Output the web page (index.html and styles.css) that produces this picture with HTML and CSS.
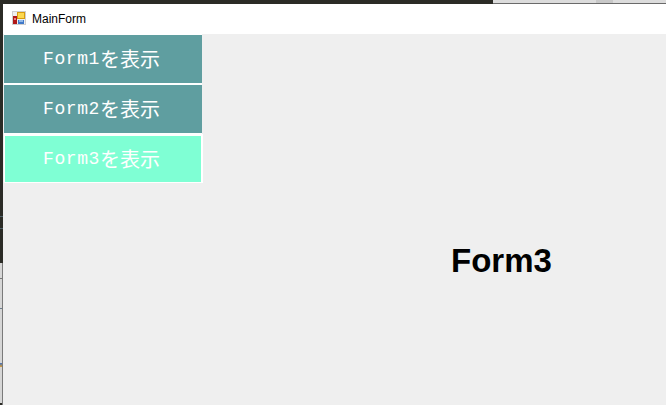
FILE: index.html
```html
<!DOCTYPE html>
<html lang="ja">
<head>
<meta charset="utf-8">
<title>MainForm</title>
<link rel="stylesheet" href="styles.css">
</head>
<body>
<div class="topstrip">
  <div class="top-dark"></div>
  <div class="top-light"><div class="top-a"></div><div class="top-b"></div><div class="top-c"></div></div>
</div>
<div class="desk">
  <div class="leftstrip">
    <div class="left-dark"></div>
    <div class="left-light"></div>
  </div>
  <div class="window">
    <div class="titlebar">
      <svg class="appicon" width="14" height="14" viewBox="0 0 14 14">
        <rect x="0" y="0" width="14" height="14" fill="#cfcfcf"/>
        <rect x="1" y="1" width="12" height="12" fill="#efefef"/>
        <rect x="1" y="5" width="4" height="8" fill="#b01818"/>
        <rect x="2" y="7" width="2" height="2" fill="#e88080"/>
        <rect x="5" y="1" width="8" height="7" fill="#d89c10"/>
        <rect x="6" y="2" width="6" height="5" fill="#fcd850"/>
        <rect x="6" y="9" width="6" height="4" fill="#3f78c8"/>
        <rect x="7" y="9" width="4" height="2" fill="#90b8e8"/>
      </svg>
      <span class="title">MainForm</span>
    </div>
    <div class="client">
      <div class="sidebar">
        <div class="btn"><span class="lat">Form1</span><span class="jp">を表示</span></div>
        <div class="btn"><span class="lat">Form2</span><span class="jp">を表示</span></div>
        <div class="btn active"><span class="lat">Form3</span><span class="jp">を表示</span></div>
      </div>
      <div class="panel"><span class="heading">Form3</span></div>
    </div>
  </div>
</div>
</body>
</html>
```
FILE: styles.css
```css
html, body {
  margin: 0;
  padding: 0;
  width: 666px;
  height: 405px;
  overflow: hidden;
  background: #efefef;
}
.topstrip {
  display: flex;
  height: 4px;
}
.top-dark {
  width: 493px;
  background: #2b2b26;
}
.top-light {
  flex: 1;
  display: flex;
  border-bottom: 1px solid #6a6a6a;
}
.top-a { width: 103px; background: #dcdcdc; }
.top-b { width: 17px; background: #c8c8c8; }
.top-c { flex: 1; background: #dcdcdc; }
.desk {
  display: flex;
  height: 401px;
}
.leftstrip {
  width: 3px;
  display: flex;
  flex-direction: column;
}
.left-dark {
  height: 259px;
  background: linear-gradient(#2b2b26 212px, #4f6068 212px, #4f6068 213px, #2b2b26 213px, #2b2b26 224px, #4f6068 224px, #4f6068 225px, #2b2b26 225px);
}
.left-light {
  flex: 1;
  box-sizing: border-box;
  border-right: 1px solid #7a7a7a;
  background: linear-gradient(#d6d6d6 15px, #777 15px, #777 16px, #d6d6d6 16px, #d6d6d6 45px, #6c7c8c 45px, #6c7c8c 46px, #d6d6d6 46px, #d6d6d6 100px, #3f6fc0 100px, #e0a030 104px, #d6d6d6 104px, #d6d6d6 140px, #2b2b26 140px);
}
.window {
  flex: 1;
  display: flex;
  flex-direction: column;
}
.titlebar {
  height: 30px;
  background: #ffffff;
  display: flex;
  align-items: center;
  padding-left: 9px;
  gap: 6px;
  box-sizing: border-box;
}
.appicon {
  display: block;
  margin-top: -2px;
}
.title {
  font-family: "Liberation Sans", Arial, sans-serif;
  font-size: 12px;
  color: #000;
  margin-top: -1px;
}
.client {
  flex: 1;
  display: flex;
  background: #efefef;
}
.sidebar {
  width: 199px;
  padding-left: 1px;
  display: flex;
  flex-direction: column;
}
.btn {
  height: 50px;
  width: 198px;
  padding-right: 3px;
  background: #5f9ea0;
  border-top: 1px solid #fff;
  border-bottom: 1px solid #fff;
  color: #fff;
  display: flex;
  align-items: center;
  justify-content: center;
  box-sizing: border-box;
}
.btn.active {
  width: 199px;
  height: 49px;
  padding-right: 3px;
  background: #7fffd4;
  border-style: solid;
  border-color: #fff;
  border-width: 2px 2px 1px 1px;
}
.lat {
  font-family: "Liberation Mono", "DejaVu Sans Mono", monospace;
  font-size: 18px;
  letter-spacing: 0.6px;
  line-height: 1;
}
.jp {
  font-family: "Noto Sans CJK JP", sans-serif;
  font-size: 20px;
  line-height: 1;
}
.panel {
  flex: 1;
  padding: 208px 0 0 248px;
}
.heading {
  font-family: "Liberation Sans", Arial, sans-serif;
  font-weight: bold;
  font-size: 33px;
  color: #000;
}
```
